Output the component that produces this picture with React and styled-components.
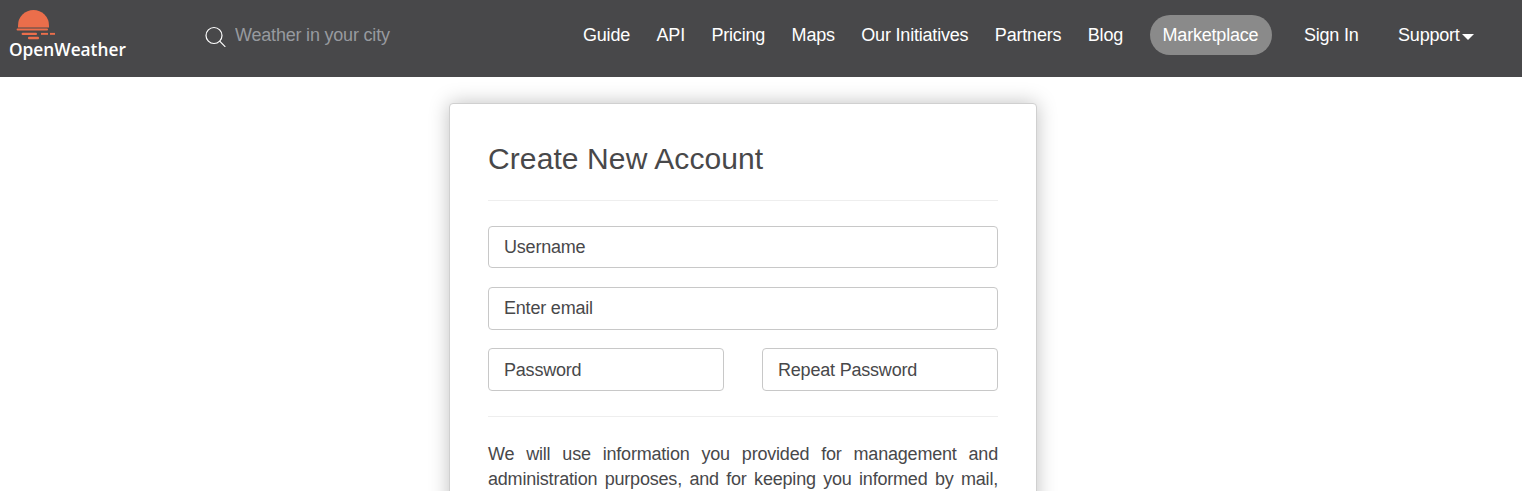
import styled, { createGlobalStyle } from "styled-components";

const GlobalStyle = createGlobalStyle`
  html, body {
    margin: 0;
    padding: 0;
    height: 100%;
    overflow: hidden;
    background: #fff;
    font-family: "Liberation Sans", Arial, sans-serif;
    font-size: 18px;
    letter-spacing: -0.2px;
    color: #48484a;
  }
`;

const Header = styled.header`
  height: 77px;
  background: #48484a;
  display: flex;
  align-items: flex-start;
`;

const LogoLink = styled.a`
  width: 205px;
  height: 77px;
  padding-left: 9px;
  box-sizing: border-box;
  display: flex;
  flex-direction: column;
  text-decoration: none;
`;

const LogoMark = styled.svg`
  display: block;
  width: 50px;
  height: 32px;
  margin: 9px 0 0 5px;
`;

const LogoText = styled.span`
  font-family: "Open Sans", sans-serif;
  font-weight: 600;
  font-size: 17.3px;
  line-height: 20px;
  letter-spacing: 0;
  color: #fff;
  margin-top: -1px;
`;

const Search = styled.div`
  width: 378px;
  height: 40px;
  margin-top: 15px;
  display: flex;
  align-items: center;
`;

const SearchInput = styled.input`
  border: 0;
  outline: 0;
  background: transparent;
  width: 200px;
  margin-left: 9px;
  padding: 0;
  font: inherit;
  letter-spacing: inherit;
  color: #fff;
  &::placeholder {
    color: #979a9f;
    opacity: 1;
  }
`;

const Nav = styled.nav`
  display: flex;
  align-items: center;
  height: 40px;
  margin-top: 15px;
  gap: 26.5px;
`;

const NavItem = styled.a`
  color: #fff;
  text-decoration: none;
  white-space: nowrap;
  display: flex;
  align-items: center;
  line-height: 40px;
`;

const Pill = styled(NavItem)`
  background: #8a8a8a;
  border-radius: 20px;
  padding: 0 13.5px 0 13px;
  margin-right: 5.5px;
`;

const SupportItem = styled(NavItem)`
  margin-left: 13px;
`;

const Caret = styled.span`
  width: 0;
  height: 0;
  margin-left: 2.5px;
  margin-top: 3px;
  border-left: 6px solid transparent;
  border-right: 6px solid transparent;
  border-top: 6px solid #fff;
`;

const Card = styled.form`
  width: 588px;
  box-sizing: border-box;
  margin: 26px 0 0 449px;
  padding: 0 38px 38px;
  background: #fff;
  border: 1px solid #d0d0d0;
  border-radius: 4px;
  box-shadow: 0 0 20px rgba(0, 0, 0, 0.25);
`;

const Title = styled.h2`
  margin: 0;
  padding: 36px 0 0;
  font-size: 30px;
  font-weight: 400;
  line-height: 38px;
  letter-spacing: 0.1px;
  color: #48484a;
`;

const Rule = styled.hr`
  border: 0;
  border-top: 1px solid #eeeeee;
  margin: ${(p) => p.$margin};
`;

const Field = styled.input`
  display: block;
  box-sizing: border-box;
  width: 100%;
  height: 42.4px;
  padding: 0 15px;
  margin-bottom: 18.8px;
  border: 1px solid #c8c8c8;
  border-radius: 4px;
  background: #fff;
  font: inherit;
  letter-spacing: inherit;
  color: #48484a;
  &::placeholder {
    color: #48484a;
    opacity: 1;
  }
`;

const PairField = styled(Field)`
  padding-top: 2px;
`;

const Row = styled.div`
  display: grid;
  grid-template-columns: 236px 236px;
  justify-content: space-between;
`;

const Notice = styled.p`
  margin: 0;
  line-height: 25.7px;
  text-align: justify;
  color: #48484a;
`;

const navItems = ["Guide", "API", "Pricing", "Maps", "Our Initiatives", "Partners", "Blog"];

function Logo() {
  return (
    <LogoMark viewBox="0 0 50 32">
      <g fill="#eb6e4b">
        <path d="M4 16.5a15.5 15.5 0 0 1 31 0v2H4z" />
        <rect x="2.6" y="19.6" width="31.4" height="1.8" rx="0.9" />
        <rect x="7.6" y="23.7" width="15.4" height="2.3" rx="1" />
        <rect x="27" y="23.9" width="7" height="1.9" />
        <rect x="36" y="23.9" width="5" height="1.9" />
        <rect x="14" y="27.7" width="11" height="2.6" rx="1" />
      </g>
    </LogoMark>
  );
}

function SearchIcon() {
  return (
    <svg width="21" height="23" viewBox="0 0 21 23" fill="none" stroke="#fff" strokeWidth="1.2">
      <circle cx="9" cy="11.5" r="8" />
      <path d="M14.7 17.2l5.6 5.6" />
    </svg>
  );
}

export default function App() {
  return (
    <>
      <GlobalStyle />
      <Header>
        <LogoLink href="#">
          <Logo />
          <LogoText>OpenWeather</LogoText>
        </LogoLink>
        <Search>
          <SearchIcon />
          <SearchInput placeholder="Weather in your city" />
        </Search>
        <Nav>
          {navItems.map((item) => (
            <NavItem href="#" key={item}>{item}</NavItem>
          ))}
          <Pill href="#">Marketplace</Pill>
          <NavItem href="#">Sign In</NavItem>
          <SupportItem href="#">
            Support
            <Caret />
          </SupportItem>
        </Nav>
      </Header>
      <Card>
        <Title>Create New Account</Title>
        <Rule $margin="22px 0 25px" />
        <Field placeholder="Username" />
        <Field type="email" placeholder="Enter email" />
        <Row>
          <PairField type="password" placeholder="Password" />
          <PairField type="password" placeholder="Repeat Password" />
        </Row>
        <Rule $margin="6.4px 0 24.6px" />
        <Notice>
          We will use information you provided for management and administration purposes, and for
          keeping you informed by mail, telephone, email and SMS of other products and services from
          us and our partners.
        </Notice>
      </Card>
    </>
  );
}
